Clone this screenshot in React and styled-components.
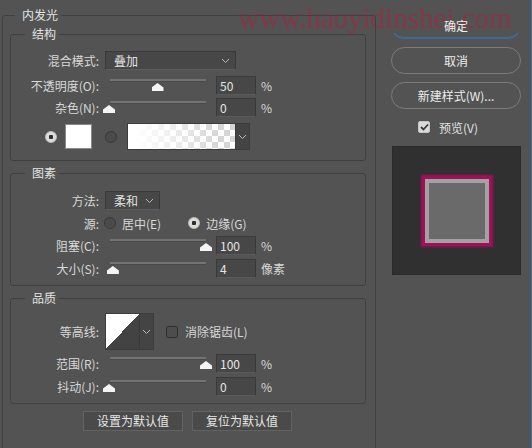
import styled, { createGlobalStyle } from "styled-components";

const GlobalStyle = createGlobalStyle`
    html, body {
        margin: 0;
        padding: 0;
        background: #535353;
    }
    body {
        font-family: "Noto Sans CJK SC", "Noto Sans", sans-serif;
        font-size: 12px;
        color: #dcdcdc;
    }
`;

const Chevron = () => (
    <svg width="9" height="6" viewBox="0 0 9 6">
        <polyline points="1,1 4.5,4.5 8,1" fill="none" stroke="#b8b8b8" strokeWidth="1" />
    </svg>
);

function SliderField({ value, unit = "%", pos }) {
    return (
        <>
            <Slider>
                <Track />
                <Thumb style={{ left: 5 + 97 * pos - 6 }} />
            </Slider>
            <NumberBox>{value}</NumberBox>
            <Unit>{unit}</Unit>
        </>
    );
}

function App() {
    return (
        <Window>
            <GlobalStyle />
            <Watermark>www.haoyidinshei.com</Watermark>

            <Outer>
                <OuterLegend>内发光</OuterLegend>

                <Group>
                    <GroupLegend>结构</GroupLegend>
                    <Body $top={10} $bottom={11}>
                        <Row>
                            <Label>混合模式:</Label>
                            <Select $width={131}>
                                <span>叠加</span>
                                <Chevron />
                            </Select>
                        </Row>
                        <Row $gap={6}>
                            <Label>不透明度(O):</Label>
                            <SliderField value="50" pos={0.5} />
                        </Row>
                        <Row $gap={3}>
                            <Label>杂色(N):</Label>
                            <SliderField value="0" pos={0} />
                        </Row>
                        <ColorRow>
                            <Radio $on />
                            <Swatch />
                            <Radio $space={13} />
                            <GradientPick>
                                <GradientBar />
                                <DropPart>
                                    <Chevron />
                                </DropPart>
                            </GradientPick>
                        </ColorRow>
                    </Body>
                </Group>

                <Group>
                    <GroupLegend>图素</GroupLegend>
                    <Body $top={11} $bottom={7}>
                        <Row>
                            <Label>方法:</Label>
                            <Select $width={55}>
                                <span>柔和</span>
                                <Chevron />
                            </Select>
                        </Row>
                        <Row $gap={4} $height={18}>
                            <Label>源:</Label>
                            <Radio $space={5} />
                            <OptionText>居中(E)</OptionText>
                            <Radio $on $space={27} />
                            <OptionText>边缘(G)</OptionText>
                        </Row>
                        <Row $gap={4}>
                            <Label>阻塞(C):</Label>
                            <SliderField value="100" pos={1} />
                        </Row>
                        <Row $gap={4}>
                            <Label>大小(S):</Label>
                            <SliderField value="4" unit="像素" pos={0.04} />
                        </Row>
                    </Body>
                </Group>

                <Group>
                    <GroupLegend>品质</GroupLegend>
                    <Body $top={9} $bottom={7}>
                        <Row $height={35}>
                            <Label>等高线:</Label>
                            <Contour>
                                <ContourCurve />
                                <DropPart>
                                    <Chevron />
                                </DropPart>
                            </Contour>
                            <Check />
                            <OptionText $space={7}>消除锯齿(L)</OptionText>
                        </Row>
                        <Row $gap={5}>
                            <Label>范围(R):</Label>
                            <SliderField value="100" pos={1} />
                        </Row>
                        <Row $gap={4}>
                            <Label>抖动(J):</Label>
                            <SliderField value="0" pos={0} />
                        </Row>
                    </Body>
                </Group>

                <DefaultRow>
                    <FlatButton>设置为默认值</FlatButton>
                    <FlatButton>复位为默认值</FlatButton>
                </DefaultRow>
            </Outer>

            <Side>
                <PillButton $primary>确定</PillButton>
                <PillButton>取消</PillButton>
                <PillButton>新建样式(W)...</PillButton>
                <PreviewToggle>
                    <Check $checked>
                        <svg width="9" height="8" viewBox="0 0 9 8">
                            <polyline points="1,4 3.5,6.5 8,1.5" fill="none" stroke="#3a3a3a" strokeWidth="1.8" />
                        </svg>
                    </Check>
                    <span>预览(V)</span>
                </PreviewToggle>
                <Preview>
                    <PreviewSquare />
                </Preview>
            </Side>
        </Window>
    );
}

const Window = styled.div`
    position: relative;
    display: flex;
    width: 532px;
    height: 448px;
    box-sizing: border-box;
    overflow: hidden;
    background: #535353;
    border-right: 1px solid #3d6f9f;
`;

const Outer = styled.fieldset`
    position: relative;
    box-sizing: border-box;
    width: 374px;
    min-height: 470px;
    flex-shrink: 0;
    margin: 8px 0 0 2px;
    padding: 5px 9px 0 7px;
    border: 1px solid #414141;
    border-radius: 3px;
`;

const OuterLegend = styled.legend`
    margin-left: 5px;
    padding: 0 3px 0 7px;
    line-height: 14px;
    color: #e2e2e2;
`;

const Group = styled.fieldset`
    margin: 0 0 5px 0;
    padding: 0;
    border: 1px solid #404040;
    border-radius: 3px;
    min-width: 0;
`;

const GroupLegend = styled.legend`
    margin-left: 14px;
    padding: 0 3px 0 7px;
    line-height: 14px;
    color: #e2e2e2;
`;

const Body = styled.div`
    padding-top: ${(p) => p.$top}px;
    padding-bottom: ${(p) => p.$bottom}px;
`;

const Row = styled.div`
    display: flex;
    align-items: center;
    height: ${(p) => p.$height || 19}px;
    margin-top: ${(p) => p.$gap || 0}px;
`;

const Label = styled.div`
    width: 88px;
    flex-shrink: 0;
    text-align: right;
    white-space: nowrap;
    color: #d8d8d8;
`;

const Select = styled.div`
    box-sizing: border-box;
    display: flex;
    align-items: center;
    justify-content: space-between;
    width: ${(p) => p.$width}px;
    height: 19px;
    margin-left: 6px;
    padding: 0 5px 0 8px;
    background: #474747;
    border: 1px solid #3a3a3a;
    border-bottom-color: #5c5c5c;
    color: #e4e4e4;
`;

const Slider = styled.div`
    position: relative;
    width: 108px;
    height: 19px;
    margin-left: 5px;
    flex-shrink: 0;
`;

const Track = styled.div`
    margin: 3px 6px 0;
    height: 2px;
    background: #737373;
    border-bottom: 1px solid #4a4a4a;
`;

const Thumb = styled.div`
    position: absolute;
    top: 7px;
    width: 12px;
    height: 8px;
    background: #f4f4f4;
    clip-path: polygon(50% 0, 100% 55%, 100% 100%, 0 100%, 0 55%);
`;

const NumberBox = styled.div`
    box-sizing: border-box;
    width: 40px;
    height: 19px;
    margin-left: 4px;
    padding: 0 3px;
    line-height: 17px;
    background: #474747;
    border: 1px solid #3a3a3a;
    border-bottom-color: #5a5a5a;
    color: #e6e6e6;
`;

const Unit = styled.span`
    margin-left: 5px;
    color: #d8d8d8;
`;

const ColorRow = styled.div`
    display: flex;
    align-items: center;
    height: 25px;
    margin-top: 7px;
    padding-left: 34px;
`;

const Radio = styled.div`
    box-sizing: border-box;
    width: 12px;
    height: 12px;
    flex-shrink: 0;
    margin-left: ${(p) => p.$space || 0}px;
    border-radius: 50%;
    background: ${(p) => (p.$on ? "radial-gradient(circle, #2e2e2e 0 2px, #dcdcdc 2.5px)" : "#4b4b4b")};
    border: 1px solid ${(p) => (p.$on ? "#bdbdbd" : "#393939")};
`;

const OptionText = styled.span`
    margin-left: ${(p) => p.$space || 6}px;
    white-space: nowrap;
    color: #d8d8d8;
`;

const Swatch = styled.div`
    box-sizing: border-box;
    width: 27px;
    height: 25px;
    margin-left: 8px;
    background: #ffffff;
    border: 1px solid #8a8a8a;
`;

const GradientPick = styled.div`
    display: flex;
    height: 25px;
    margin-left: 10px;
    border: 1px solid #3c3c3c;
`;

const GradientBar = styled.div`
    width: 107px;
    background: linear-gradient(to right, #ffffff 8%, rgba(255, 255, 255, 0) 85%),
        conic-gradient(#d6d6d6 25%, #ffffff 0 50%, #d6d6d6 0 75%, #ffffff 0) 0 0 / 12px 12px;
`;

const DropPart = styled.div`
    display: flex;
    align-items: center;
    justify-content: center;
    width: 13px;
    background: #444444;
    border-left: 1px solid #3a3a3a;
`;

const Contour = styled.div`
    display: flex;
    height: 35px;
    margin-left: 6px;
    border: 1px solid #3c3c3c;
`;

const ContourCurve = styled.div`
    width: 33px;
    background: linear-gradient(to bottom right, #ffffff 50%, #434343 50%);
`;

const Check = styled.div`
    box-sizing: border-box;
    display: flex;
    align-items: center;
    justify-content: center;
    width: 12px;
    height: 12px;
    flex-shrink: 0;
    margin-left: 12px;
    border-radius: 2px;
    background: ${(p) => (p.$checked ? "#dadada" : "#4d4d4d")};
    border: 1px solid ${(p) => (p.$checked ? "#c4c4c4" : "#2f2f2f")};
`;

const DefaultRow = styled.div`
    display: flex;
    gap: 9px;
    margin-top: 7px;
    padding-left: 73px;
`;

const FlatButton = styled.div`
    box-sizing: border-box;
    width: 100px;
    height: 20px;
    line-height: 18px;
    text-align: center;
    background: #4a4a4a;
    border: 1px solid #626262;
    color: #e6e6e6;
`;

const Side = styled.div`
    position: relative;
    display: flex;
    flex-direction: column;
    gap: 8px;
    padding: 12px 0 0 15px;
`;

const PillButton = styled.div`
    box-sizing: border-box;
    width: 130px;
    height: 27px;
    line-height: 25px;
    text-align: center;
    border-radius: 14px;
    border: 1px solid ${(p) => (p.$primary ? "transparent" : "#7c7c7c")};
    border-bottom: ${(p) => (p.$primary ? "2px solid #3a6b9c" : "1px solid #7c7c7c")};
    color: #ededed;
`;

const PreviewToggle = styled.div`
    display: flex;
    align-items: center;
    gap: 9px;
    height: 14px;
    margin: 3px 0 4px 27px;
    color: #e2e2e2;

    ${Check} {
        margin-left: 0;
    }
`;

const Preview = styled.div`
    box-sizing: border-box;
    display: flex;
    align-items: center;
    justify-content: center;
    width: 129px;
    height: 129px;
    margin-left: 1px;
    background: #303030;
    border: 1px solid #2a2a2a;
`;

const PreviewSquare = styled.div`
    box-sizing: border-box;
    width: 64px;
    height: 64px;
    background: #6a6a6a;
    border: 4px solid #a2a2a2;
    box-shadow: 0 0 2px 4px #a0115a;
`;

const Watermark = styled.div`
    position: absolute;
    top: 4px;
    left: 238px;
    font-family: "Liberation Serif", serif;
    font-size: 29px;
    line-height: 29px;
    color: rgba(176, 30, 62, 0.5);
    filter: blur(0.6px);
    white-space: nowrap;
    pointer-events: none;
`;

export default App;
